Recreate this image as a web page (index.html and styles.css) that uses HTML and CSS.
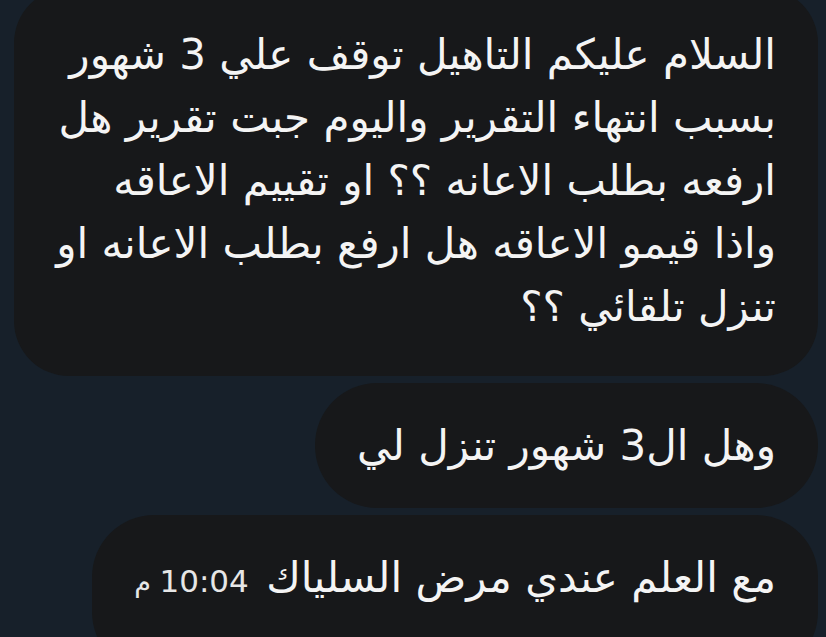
FILE: index.html
```html
<!DOCTYPE html>
<html lang="ar" dir="rtl">
<head>
    <meta charset="UTF-8">
    <meta name="viewport" content="width=device-width, initial-scale=1.0">
    <title>محادثة</title>
    <link rel="stylesheet" href="styles.css">
</head>
<body>
    <div class="chat">
        <div class="bubble first">
            السلام عليكم التاهيل توقف علي 3 شهور<br>
            بسبب انتهاء التقرير واليوم جبت تقرير هل<br>
            ارفعه بطلب الاعانه ؟؟ او تقييم الاعاقه<br>
            واذا قيمو الاعاقه هل ارفع بطلب الاعانه او<br>
            تنزل تلقائي ؟؟
        </div>
        <div class="bubble">وهل ال3 شهور تنزل لي</div>
        <div class="bubble last">
            مع العلم عندي مرض السلياك
            <span class="time"><span class="clock">10:04</span> م</span>
        </div>
    </div>
</body>
</html>
```

FILE: styles.css
```css
body {
    margin: 0;
    background-color: #17202a;
    color: #f4f4f4;
    font-family: "DejaVu Sans", sans-serif;
    overflow: hidden;
}
.chat {
    display: flex;
    flex-direction: column;
    align-items: flex-start;
    gap: 7px;
    margin-top: -12px;
    padding-right: 8px;
}
.bubble {
    background-color: #17181a;
    border-radius: 62px;
    padding: 31px 42px 31px 42px;
    font-size: 42px;
    line-height: 63px;
}
.bubble.first {
    border-radius: 55px;
    padding-top: 35px;
    padding-bottom: 38px;
}
.bubble.last {
    padding-bottom: 60px;
}
.time {
    margin-right: 4px;
    color: #e6e6e6;
    font-size: 27px;
}
.clock {
    font-size: 31px;
}
```
